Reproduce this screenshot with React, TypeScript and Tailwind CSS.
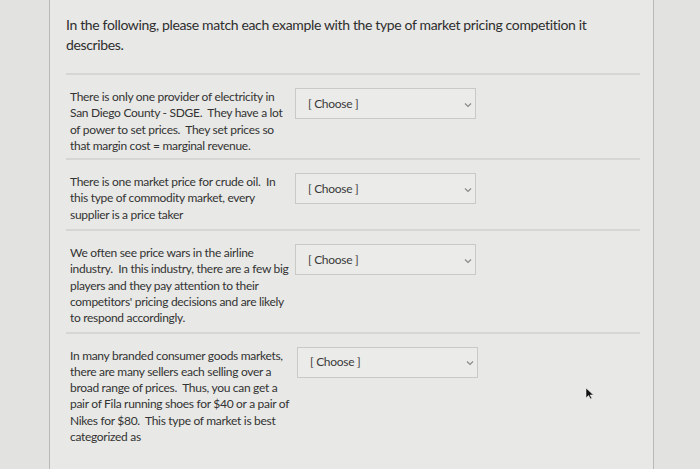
const rows: { lines: string[]; pb: string; selectMl?: string }[] = [
  {
    lines: [
      "There is only one provider of electricity in",
      "San Diego County - SDGE.  They have a lot",
      "of power to set prices.  They set prices so",
      "that margin cost = marginal revenue.",
    ],
    pb: "pb-[4px]",
  },
  {
    lines: [
      "There is one market price for crude oil.  In",
      "this type of commodity market, every",
      "supplier is a price taker",
    ],
    pb: "pb-[6px]",
  },
  {
    lines: [
      "We often see price wars in the airline",
      "industry.  In this industry, there are a few big",
      "players and they pay attention to their",
      "competitors' pricing decisions and are likely",
      "to respond accordingly.",
    ],
    pb: "pb-[5px]",
  },
  {
    lines: [
      "In many branded consumer goods markets,",
      "there are many sellers each selling over a",
      "broad range of prices.  Thus, you can get a",
      "pair of Fila running shoes for $40 or a pair of",
      "Nikes for $80.  This type of market is best",
      "categorized as",
    ],
    pb: "pb-[20px]",
    selectMl: "ml-[2px]",
  },
]

function Select({ ml }: { ml?: string }) {
  return (
    <div
      className={`flex h-[31px] w-[181px] shrink-0 items-center justify-between border border-[#c9c9c7] bg-[#ebebe9] pl-[12px] pr-[3px] ${ml ?? ""}`}
    >
      <span className="text-[12px] tracking-[-0.3px] text-[#3a3a3a]">[ Choose ]</span>
      <svg width="8" height="6" viewBox="0 0 8 6" className="mt-[2px]">
        <path d="M1 1.5 L4 4.5 L7 1.5" fill="none" stroke="#8a8a8a" strokeWidth="1.2" />
      </svg>
    </div>
  )
}

export default function App() {
  return (
    <div
      className="relative min-h-[469px] bg-[#e2e2e0] text-[#333333]"
      style={{ fontFamily: "Lato, 'Open Sans', sans-serif" }}
    >
      <div className="ml-[49px] min-h-[469px] w-[605px] border-x border-[#b9b9b7] bg-[#e8e8e6] pl-[16px] pr-[13px]">
        <p className="pt-[15px] pb-[18px] text-[14px] leading-[20px] tracking-[-0.35px] text-[#2e2e2e]">
          In the following, please match each example with the type of market pricing competition it
          <br />
          describes.
        </p>
        {rows.map((row, i) => (
          <div
            key={i}
            className={`flex border-t-2 border-[#d6d6d4] pt-[13px] pl-[4px] ${row.pb}`}
          >
            <div className="w-[225px] shrink-0 pt-[1px] text-[12px] leading-[16.3px] tracking-[-0.3px] whitespace-pre">
              {row.lines.map((l, j) => (
                <div key={j}>{l}</div>
              ))}
            </div>
            <Select ml={row.selectMl} />
          </div>
        ))}
      </div>
      <svg
        className="absolute left-[585px] top-[387px]"
        width="9"
        height="13"
        viewBox="0 0 9 13"
      >
        <path d="M1 1 L1 11 L3.5 8.5 L5.5 12 L7 11.3 L5 8 L8.5 8 Z" fill="#111" stroke="#eee" strokeWidth="0.6" />
      </svg>
    </div>
  )
}
